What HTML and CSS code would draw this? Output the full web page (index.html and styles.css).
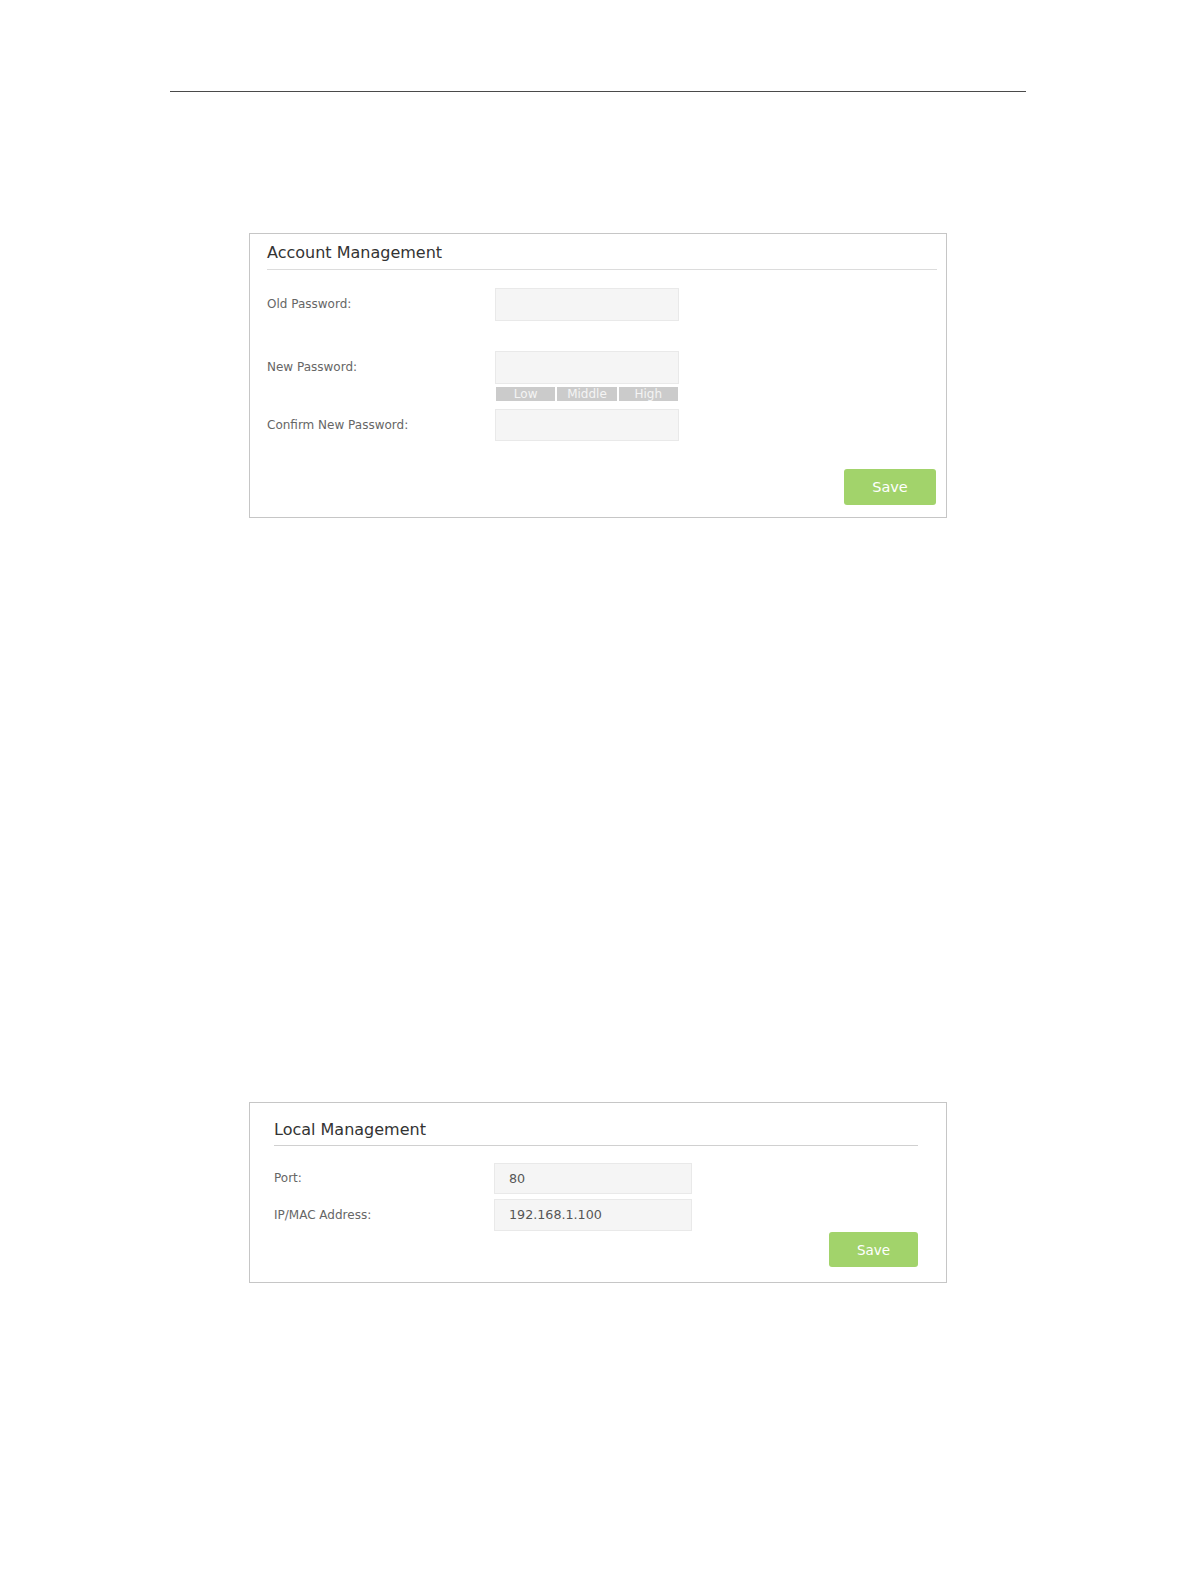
FILE: index.html
```html
<!DOCTYPE html>
<html>
<head>
<meta charset="utf-8">
<link rel="stylesheet" href="styles.css">
</head>
<body>
<div class="page">
  <div class="rule"></div>

  <section class="panel panel-account">
    <h2 class="panel-title">Account Management</h2>
    <div class="row row-first">
      <label class="label">Old Password:</label>
      <div class="field"><div class="input"></div></div>
    </div>
    <div class="row row-new">
      <label class="label">New Password:</label>
      <div class="field">
        <div class="input"></div>
        <div class="strength">
          <span class="seg">Low</span>
          <span class="seg">Middle</span>
          <span class="seg">High</span>
        </div>
      </div>
    </div>
    <div class="row row-confirm">
      <label class="label">Confirm New Password:</label>
      <div class="field"><div class="input input-confirm"></div></div>
    </div>
    <div class="actions">
      <button class="btn">Save</button>
    </div>
  </section>

  <section class="panel panel-local">
    <h2 class="panel-title">Local Management</h2>
    <div class="row row-port">
      <label class="label label-local">Port:</label>
      <div class="field"><div class="input input-local">80</div></div>
    </div>
    <div class="row row-ip">
      <label class="label label-local">IP/MAC Address:</label>
      <div class="field"><div class="input input-local input-ip">192.168.1.100</div></div>
    </div>
    <div class="actions actions-local">
      <button class="btn btn-local">Save</button>
    </div>
  </section>
</div>
</body>
</html>
```

FILE: styles.css
```css
* { box-sizing: border-box; }
html, body {
  margin: 0;
  padding: 0;
  background: #ffffff;
}
body {
  font-family: "DejaVu Sans", Verdana, sans-serif;
  color: #333;
}
.page {
  width: 1196px;
  padding-top: 91px;
  padding-bottom: 300px;
}
.rule {
  margin-left: 170px;
  width: 856px;
  height: 1px;
  background: #4a4a4a;
}
.panel {
  margin-left: 249px;
  width: 698px;
  border: 1px solid #c6c6c6;
  background: #fff;
}
.panel-account {
  margin-top: 141px;
  padding: 8px 9px 12px 17px;
}
.panel-local {
  margin-top: 584px;
  padding: 16px 28px 15px 24px;
}
.panel-title {
  margin: 0;
  font-size: 16px;
  font-weight: normal;
  line-height: 22px;
  color: #333;
  padding-bottom: 5px;
  border-bottom: 1px solid #dcdcdc;
}
.panel-local .panel-title {
  padding-bottom: 4px;
  border-bottom-color: #d0d0d0;
}
.row {
  display: flex;
  align-items: flex-start;
}
.row-first { margin-top: 18px; }
.row-new { margin-top: 30px; }
.row-confirm { margin-top: 8px; }
.row-port { margin-top: 17px; }
.row-ip { margin-top: 5px; }
.label {
  width: 228px;
  font-size: 12px;
  line-height: 33px;
  color: #666;
  flex: none;
}
.label-local {
  width: 220px;
  line-height: 31px;
}
.row-ip .label-local { line-height: 32px; }
.field {
  width: 184px;
}
.input {
  height: 33px;
  width: 184px;
  background: #f5f5f5;
  border: 1px solid #e9e9e9;
}
.input-confirm { height: 32px; }
.input-local {
  width: 198px;
  height: 31px;
  font-size: 12.7px;
  line-height: 29px;
  padding-left: 14px;
  color: #555;
}
.input-ip { height: 32px; line-height: 30px; }
.strength {
  display: flex;
  margin-top: 3px;
  margin-left: 1px;
  width: 182px;
  height: 14px;
  gap: 2px;
}
.seg {
  flex: 1;
  background: #cbcbcb;
  color: #f4f4f4;
  font-size: 12px;
  line-height: 14px;
  text-align: center;
  overflow: hidden;
}
.actions {
  display: flex;
  justify-content: flex-end;
  margin-top: 27px;
}
.actions-local { margin-top: 1px; }
.btn {
  width: 92px;
  height: 36px;
  border: none;
  border-radius: 3px;
  background: #a2d36b;
  color: #fff;
  font-family: "DejaVu Sans", Verdana, sans-serif;
  font-size: 14.5px;
  padding: 0;
  margin-right: 1px;
}
.btn-local {
  width: 89px;
  height: 35px;
  font-size: 13.5px;
  margin-right: 0;
}
```
